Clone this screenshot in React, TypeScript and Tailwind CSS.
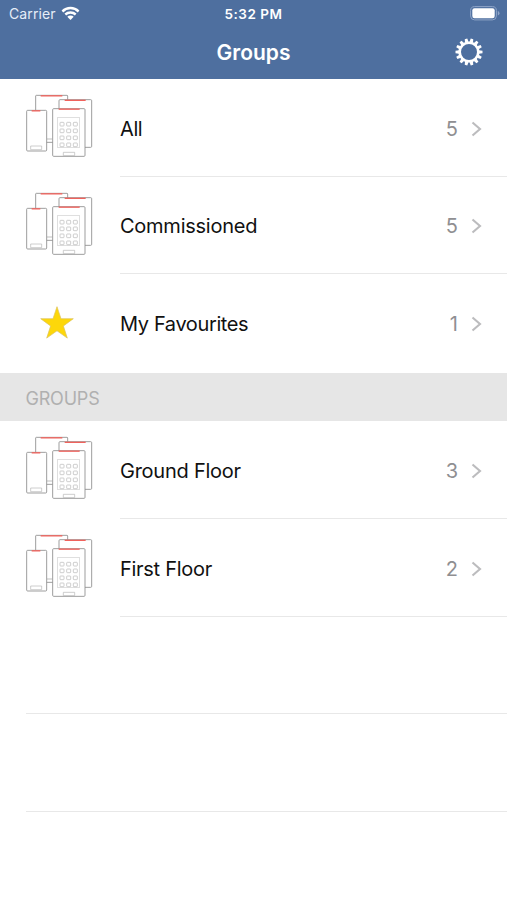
import clsx from "clsx";

type Row = {
  label: string;
  count: number;
  icon: "readers" | "star";
  height: string;
  tracking: string;
  divider: boolean;
};

const overview: Row[] = [
  { label: "All", count: 5, icon: "readers", height: "h-[98px]", tracking: "tracking-[-0.4px]", divider: true },
  { label: "Commissioned", count: 5, icon: "readers", height: "h-[97px]", tracking: "tracking-[-0.25px]", divider: true },
  { label: "My Favourites", count: 1, icon: "star", height: "h-[99px]", tracking: "tracking-[-0.38px]", divider: false },
];

const groups: Row[] = [
  { label: "Ground Floor", count: 3, icon: "readers", height: "h-[98px]", tracking: "tracking-[-0.25px]", divider: true },
  { label: "First Floor", count: 2, icon: "readers", height: "h-[98px]", tracking: "tracking-[-0.28px]", divider: true },
];

const KEY_X = [135, 155, 175];
const KEY_Y = [112, 132, 153, 174];

const ReadersIcon = () => (
  <svg width="67" height="63" viewBox="33 27 201 189" fill="none" strokeWidth="2.6">
    <g stroke="#8f8f8f" fill="#fff">
      <path d="M62 172V33q0-2 2-2h92q2 0 2 2v139z" />
      <path d="M96 162h16" stroke="#b5b5b5" />
      <rect x="132" y="44" width="98" height="143" rx="3" />
      <rect x="35" y="76" width="60" height="122" rx="3" />
      <rect x="113" y="71" width="97" height="143" rx="3" />
    </g>
    <g stroke="#b5b5b5" strokeWidth="2">
      <path d="M47 194v-11h33v11z" />
      <path d="M145 212v-10h34v10z" />
      <rect x="128" y="97" width="65" height="91" stroke="#cfcfcf" />
      {KEY_Y.map((y) =>
        KEY_X.map((x) => <rect key={`${x}-${y}`} x={x} y={y} width="12" height="11" rx="2" />)
      )}
    </g>
    <g stroke="#f0625c" strokeWidth="4">
      <path d="M77 32.500h65" />
      <path d="M149 46h63" />
      <path d="M50 77.500h26" />
      <path d="M131 72.500h63" />
    </g>
  </svg>
);

const StarIcon = () => (
  <svg width="34" height="33" viewBox="0 0 34 33">
    <path
      d="M17 .7l4 12h12.3l-9.9 7.3 3.9 12.1L17 24.8 6.7 32.1 10.600 20 .7 12.700H13z"
      fill="#fdd70a"
      stroke="#dcc35c"
      strokeWidth=".7"
    />
  </svg>
);

const WifiIcon = () => (
  <svg width="19" height="15" viewBox="0 0 19 15" fill="#fff">
    <path d="M.6 4.500a12.700 12.700 0 0 1 17.800 0l-1.600 1.900a10.300 10.300 0 0 0-14.600 0z" />
    <path d="M3.500 7.600a8.600 8.600 0 0 1 12 0l-1.600 1.900a6.200 6.200 0 0 0-8.800 0z" />
    <path d="M6.300 10.700a4.600 4.600 0 0 1 6.400 0L9.500 14z" />
  </svg>
);

const BatteryIcon = () => (
  <svg width="30" height="15" viewBox="0 0 30 15">
    <rect x=".6" y=".6" width="25.800" height="13.300" rx="4" fill="none" stroke="#8fa5c8" strokeWidth="1" />
    <rect x="2.300" y="2.300" width="22.400" height="9.900" rx="2.200" fill="#fff" />
    <path d="M27.800 5v4.500q1.700-.6 1.700-2.250T27.800 5z" fill="#8fa5c8" />
  </svg>
);

const TEETH = Array.from({ length: 14 }, (_, i) => (i * 360) / 14 + 360 / 28);

const GearIcon = () => (
  <svg width="28" height="28" viewBox="-14 -14 28 28">
    <circle r="9.300" fill="none" stroke="#fff" strokeWidth="2.600" />
    {TEETH.map((angle) => (
      <path key={angle} d="M-1.800-9.800L-1.300-13.500H1.300L1.800-9.800z" fill="#fff" transform={`rotate(${angle})`} />
    ))}
  </svg>
);

const Chevron = () => (
  <svg width="11" height="16" viewBox="0 0 11 16" fill="none" stroke="#bcbcbe" strokeWidth="2.100">
    <path d="M1.500 1.500L9 8l-7.500 6.500" />
  </svg>
);

const GroupRow = ({ label, count, icon, height, tracking, divider }: Row) => (
  <li className={clsx("flex", height)}>
    <div className="flex w-[120px] items-center pb-[5px] pl-[26px]">
      {icon === "readers" ? (
        <ReadersIcon />
      ) : (
        <div className="ml-[14px] pt-0.5">
          <StarIcon />
        </div>
      )}
    </div>
    <div
      className={clsx(
        "flex flex-1 items-center border-b pt-0.5 pr-[25px]",
        divider ? "border-[#e8e8e8]" : "border-transparent"
      )}
    >
      <span className={clsx("flex-1 text-[20px] text-[#111]", tracking)}>{label}</span>
      <span className="mr-[13px] text-[20px] text-[#8f8f92]">{count}</span>
      <Chevron />
    </div>
  </li>
);

export default function App() {
  return (
    <div className="h-[900px] w-[507px] overflow-hidden bg-white font-['Inter',sans-serif]">
      <header className="h-[79px] bg-[#4e6f9f] text-white">
        <div className="grid h-[27px] grid-cols-3 items-center">
          <div className="flex items-center gap-[5px] pl-[9px]">
            <span className="text-[14px] tracking-[0.1px] text-[#e6edf8]">Carrier</span>
            <WifiIcon />
          </div>
          <span className="pt-px text-center text-[13.5px] font-semibold tracking-[0.55px]">5:32 PM</span>
          <div className="flex justify-end pr-[7px]">
            <BatteryIcon />
          </div>
        </div>
        <div className="grid h-[50px] grid-cols-3 items-center">
          <h1 className="col-start-2 pt-px text-center text-[21px] font-semibold">Groups</h1>
          <button className="mr-[24px] justify-self-end" aria-label="Settings">
            <GearIcon />
          </button>
        </div>
      </header>

      <ul>
        {overview.map((row) => (
          <GroupRow key={row.label} {...row} />
        ))}
      </ul>

      <h2 className="flex h-12 items-center bg-[#e6e6e6] pt-0.5 pl-[25.5px] text-[18px] tracking-[-0.2px] text-[#b0b0b0]">
        GROUPS
      </h2>

      <ul>
        {groups.map((row) => (
          <GroupRow key={row.label} {...row} />
        ))}
      </ul>
      <div className="ml-[26px] h-[97px] border-b border-[#e8e8e8]" />
      <div className="ml-[26px] h-[98px] border-b border-[#e8e8e8]" />
    </div>
  );
}
